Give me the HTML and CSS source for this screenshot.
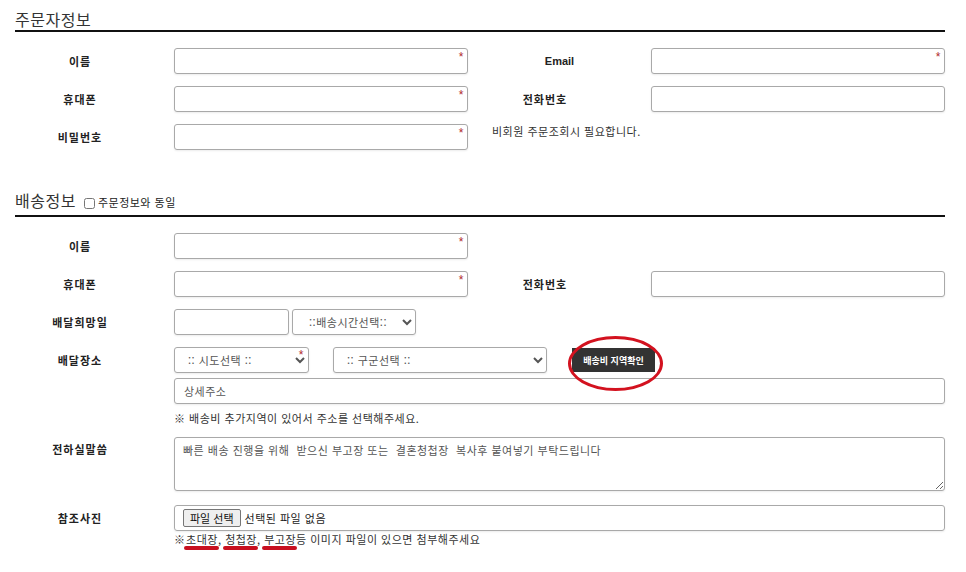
FILE: index.html
```html
<!DOCTYPE html>
<html lang="ko">
<head>
<meta charset="utf-8">
<title>주문서</title>
<link rel="stylesheet" href="styles.css">
</head>
<body>
<div class="page">
  <section class="sec">
    <h2 class="sec-title">주문자정보</h2>
    <div class="grid">
      <div class="lbl">이름</div>
      <div class="field req"><input class="inp" type="text"></div>
      <div class="lbl en">Email</div>
      <div class="field req"><input class="inp" type="text"></div>

      <div class="lbl">휴대폰</div>
      <div class="field req"><input class="inp" type="text"></div>
      <div class="lbl">전화번호</div>
      <div class="field"><input class="inp" type="text"></div>

      <div class="lbl">비밀번호</div>
      <div class="field req"><input class="inp" type="password"></div>
      <div class="side-note">비회원 주문조회시 필요합니다.</div>
    </div>
  </section>

  <section class="sec sec2">
    <h2 class="sec-title alt">배송정보<input class="chk" type="checkbox" id="same"><label class="chk-lbl" for="same">주문정보와 동일</label></h2>

    <div class="row">
      <div class="lbl">이름</div>
      <div class="field req"><input class="inp" type="text"></div>
    </div>

    <div class="row">
      <div class="lbl">휴대폰</div>
      <div class="field req"><input class="inp" type="text"></div>
      <div class="lbl">전화번호</div>
      <div class="field"><input class="inp" type="text"></div>
    </div>

    <div class="row">
      <div class="lbl">배달희망일</div>
      <div class="wide date-line">
        <input class="inp date" type="text">
        <select class="sel time"><option>::배송시간선택::</option></select>
      </div>
    </div>

    <div class="row">
      <div class="lbl">배달장소</div>
      <div class="wide addr">
        <div class="addr-line">
          <div class="field req sido-wrap"><select class="sel sido"><option>:: 시도선택 ::</option></select></div>
          <select class="sel gugun"><option>:: 구군선택 ::</option></select>
          <div class="btn-wrap"><button class="btn-dark" type="button">배송비 지역확인</button></div>
        </div>
        <input class="inp" type="text" placeholder="상세주소">
        <p class="note">※ 배송비 추가지역이 있어서 주소를 선택해주세요.</p>
      </div>
    </div>

    <div class="row msg-row">
      <div class="lbl top">전하실말씀</div>
      <div class="wide"><textarea class="ta">빠른 배송 진행을 위해  받으신 부고장 또는  결혼청첩장  복사후 붙여넣기 부탁드립니다</textarea></div>
    </div>

    <div class="row photo-row">
      <div class="lbl">참조사진</div>
      <div class="wide">
        <div class="filebox"><span class="fbtn">파일 선택</span><span class="fname">선택된 파일 없음</span></div>
        <p class="note tight"><span class="mark">※ </span><span class="ul">초대장</span>, <span class="ul">청첩장</span>, <span class="ul">부고장</span>등 이미지 파일이 있으면 첨부해주세요</p>
      </div>
    </div>
  </section>
</div>
</body>
</html>
```

FILE: styles.css
```css
* { box-sizing: border-box; }

body {
  margin: 0;
  background: #fff;
  color: #222;
  font-family: "Noto Sans CJK KR", "Noto Sans", "Liberation Sans", sans-serif;
  font-size: 11px;
  letter-spacing: 0.5px;
}

.page {
  margin-left: 15px;
  width: 930px;
}

.sec-title {
  margin: 0;
  height: 32px;
  padding-top: 8px;
  font-size: 16px;
  line-height: 22px;
  font-weight: 400;
  color: #333;
  border-bottom: 2px solid #111;
}

.sec-title.alt {
  padding-top: 4px;
}

.sec2 {
  margin-top: 35px;
}

.chk {
  width: 11px;
  height: 11px;
  margin: 0 3px 0 8px;
  vertical-align: -2px;
}

.chk-lbl {
  font-size: 11px;
  color: #222;
}

.grid {
  margin-top: 16px;
  display: grid;
  grid-template-columns: 159px 294px 183px 294px;
  row-gap: 12px;
}

.row {
  display: grid;
  grid-template-columns: 159px 294px 183px 294px;
  margin-bottom: 12px;
}

.sec2 .row:first-of-type {
  margin-top: 16px;
}

.lbl {
  height: 26px;
  line-height: 26px;
  padding-right: 29px;
  text-align: center;
  font-weight: 700;
  letter-spacing: 1px;
  color: #222;
}

.lbl.en {
  padding-right: 0;
  letter-spacing: 0;
  font-family: "Liberation Sans", Arial, sans-serif;
}

.lbl.top {
  line-height: 24px;
}

.field {
  position: relative;
}

.req::after {
  content: "*";
  position: absolute;
  right: 4px;
  top: 3px;
  font: 12px/1 "Liberation Sans", Arial, sans-serif;
  color: #b0282c;
}

.inp {
  display: block;
  width: 100%;
  height: 26px;
  margin: 0;
  padding: 0 9px;
  border: 1px solid #a9a9a9;
  border-radius: 3px;
  box-shadow: 0 1px 2px rgba(0, 0, 0, 0.08);
  background: #fff;
  font: 11px "Noto Sans CJK KR", sans-serif;
  letter-spacing: 0.5px;
  color: #555;
}

.inp::placeholder {
  color: #555;
}

.side-note {
  grid-column: 3 / span 2;
  padding-left: 24px;
  line-height: 14px;
  color: #333;
}

.wide {
  grid-column: 2 / span 3;
}

.date-line {
  display: flex;
  gap: 3px;
}

.inp.date {
  width: 115px;
}

.sel {
  height: 26px;
  margin: 0;
  padding-left: 9px;
  border: 1px solid #a9a9a9;
  border-radius: 3px;
  box-shadow: 0 1px 2px rgba(0, 0, 0, 0.08);
  background-color: #fff;
  font: 11px "Noto Sans CJK KR", sans-serif;
  letter-spacing: 0.5px;
  color: #555;
}

.sel.time {
  width: 124px;
  padding-left: 12px;
}

.addr {
  display: flex;
  flex-direction: column;
  gap: 5px;
}

.addr-line {
  display: flex;
  align-items: center;
}

.sido-wrap {
  width: 135px;
}

.sido-wrap::after {
  right: 5px;
  top: 2px;
}

.sel.sido {
  width: 135px;
  display: block;
}

.sel.gugun {
  width: 214px;
  margin-left: 24px;
}

.btn-wrap {
  position: relative;
  margin-left: 25px;
}

.btn-wrap::after {
  content: "";
  position: absolute;
  left: -4px;
  top: -12px;
  width: 89px;
  height: 49px;
  border: 3px solid #d3121f;
  border-radius: 50%;
  pointer-events: none;
}

.btn-dark {
  display: block;
  width: 83px;
  height: 24px;
  padding: 0;
  border: 0;
  background: #333;
  color: #fff;
  font: 700 9px "Noto Sans CJK KR", sans-serif;
  letter-spacing: 0;
}

.note {
  margin: 2px 0 0;
  line-height: 14px;
  color: #333;
}

.msg-row {
  margin-top: 1px;
  margin-bottom: 14px;
}

.ta {
  display: block;
  width: 100%;
  height: 54px;
  margin: 0;
  padding: 5px 8px;
  border: 1px solid #a9a9a9;
  border-radius: 3px;
  box-shadow: 0 1px 2px rgba(0, 0, 0, 0.08);
  font: 11px/14px "Noto Sans CJK KR", sans-serif;
  letter-spacing: 0.5px;
  color: #555;
  white-space: pre-wrap;
}

.filebox {
  display: flex;
  align-items: center;
  gap: 4px;
  height: 26px;
  padding-left: 8px;
  border: 1px solid #a9a9a9;
  border-radius: 3px;
  box-shadow: 0 1px 2px rgba(0, 0, 0, 0.08);
}

.fbtn {
  height: 18px;
  padding: 0 6px;
  border: 1px solid #767676;
  border-radius: 2px;
  background: #efefef;
  line-height: 16px;
  letter-spacing: 0;
  color: #111;
}

.fname {
  color: #222;
}

.note.tight {
  margin-top: 1px;
}

.mark {
  letter-spacing: -1px;
}

.ul {
  position: relative;
  display: inline-block;
  line-height: 14px;
}

.ul::after {
  content: "";
  position: absolute;
  left: -2px;
  right: -1px;
  top: 14px;
  height: 4px;
  border-radius: 2px;
  background: #c8101f;
}
```
